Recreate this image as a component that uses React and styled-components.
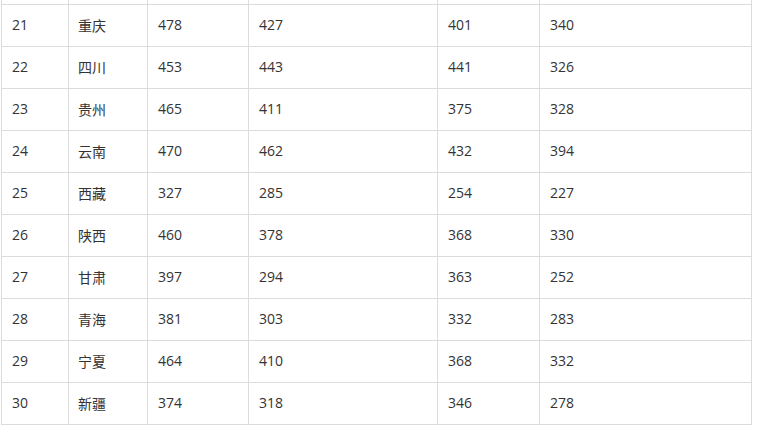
import React from "react";
import styled, { createGlobalStyle } from "styled-components";

const GlobalStyle = createGlobalStyle`
  html, body {
    margin: 0;
    padding: 0;
    background: #fff;
  }
  body {
    font-family: "Open Sans", "Noto Sans CJK SC", sans-serif;
  }
`;

const rows = [
  ["21", "重庆", "478", "427", "401", "340"],
  ["22", "四川", "453", "443", "441", "326"],
  ["23", "贵州", "465", "411", "375", "328"],
  ["24", "云南", "470", "462", "432", "394"],
  ["25", "西藏", "327", "285", "254", "227"],
  ["26", "陕西", "460", "378", "368", "330"],
  ["27", "甘肃", "397", "294", "363", "252"],
  ["28", "青海", "381", "303", "332", "283"],
  ["29", "宁夏", "464", "410", "368", "332"],
  ["30", "新疆", "374", "318", "346", "278"],
];

const widths = [67, 79, 101, 189, 102, 212];

const Table = styled.table`
  border-collapse: separate;
  border-spacing: 0;
  table-layout: fixed;
  width: 751px;
  margin: -38px 0 0 1px;
  border-top: 1px solid #dcdcdc;
  border-left: 1px solid #dcdcdc;
`;

const Row = styled.tr`
  height: 42px;
`;

const Cell = styled.td`
  box-sizing: border-box;
  height: 42px;
  padding: 0 0 2px ${(p) => (p.$cn ? "9px" : "10px")};
  border-right: 1px solid #dcdcdc;
  border-bottom: 1px solid #dcdcdc;
  font-size: 14px;
  color: #333;
  vertical-align: middle;
  white-space: nowrap;
`;

export default function App() {
  return (
    <>
      <GlobalStyle />
      <Table>
        <colgroup>
          {widths.map((w, i) => (
            <col key={i} style={{ width: w }} />
          ))}
        </colgroup>
        <tbody>
          <Row>
            {widths.map((_, i) => (
              <Cell key={i} />
            ))}
          </Row>
          {rows.map((r) => (
            <Row key={r[0]}>
              {r.map((v, i) => (
                <Cell key={i} $cn={i === 1}>
                  {v}
                </Cell>
              ))}
            </Row>
          ))}
        </tbody>
      </Table>
    </>
  );
}
